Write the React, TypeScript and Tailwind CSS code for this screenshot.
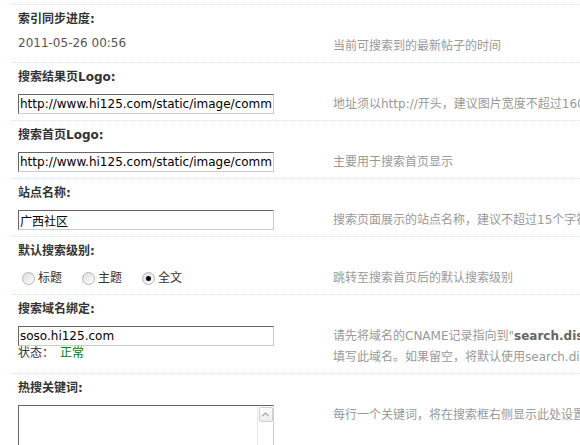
import type { ReactNode } from 'react'

const inputCls =
  "block w-[256px] h-[20px] border border-solid border-t-[#666] border-l-[#666] border-r-[#ccc] border-b-[#ccc] bg-white px-[1px] text-[12px] leading-[18px] text-black outline-none font-['DejaVu_Sans','Noto_Sans_CJK_SC',sans-serif]"

// 一组设置项：标题行 + 内容行（左输入，右提示）
function SettingRow({ label, left, tip }: { label: string; left: ReactNode; tip: ReactNode }) {
  return (
    <div className="border-t border-dotted border-[#cfe6f5]">
      <div className="h-[27px] flex items-center pl-[6px] font-bold text-[#333]">{label}</div>
      <div className="flex items-start pt-[4px] pb-[5px]">
        <div className="w-[315px] shrink-0 pl-[6px]">{left}</div>
        <div className="pl-[6px] text-[#999] leading-[21px] whitespace-nowrap">{tip}</div>
      </div>
    </div>
  )
}

function Radio({ label, checked }: { label: string; checked?: boolean }) {
  return (
    <span className="flex items-center mr-[20px]">
      <span className="w-[13px] h-[13px] rounded-full border border-[#b4b4b4] bg-gradient-to-br from-[#dcdcdc] to-white flex items-center justify-center mr-[3px]">
        {checked && <span className="w-[5px] h-[5px] rounded-full bg-black" />}
      </span>
      <span className="text-[#333]">{label}</span>
    </span>
  )
}

export default function App() {
  return (
    <div className="w-[580px] h-[445px] overflow-hidden bg-white text-[12px] font-['DejaVu_Sans','Noto_Sans_CJK_SC',sans-serif]">
      <div className="w-[900px] pt-[4px] pl-[12px]">
        <SettingRow
          label="索引同步进度:"
          left={<div className="leading-[14px] text-[#555]">2011-05-26 00:56</div>}
          tip="当前可搜索到的最新帖子的时间"
        />
        <SettingRow
          label="搜索结果页Logo:"
          left={<input className={inputCls} readOnly value="http://www.hi125.com/static/image/common/logo_sc_s.png" />}
          tip="地址须以http://开头，建议图片宽度不超过160像素，高度不超过60像素"
        />
        <SettingRow
          label="搜索首页Logo:"
          left={<input className={inputCls} readOnly value="http://www.hi125.com/static/image/common/logo_sc.png" />}
          tip="主要用于搜索首页显示"
        />
        <SettingRow
          label="站点名称:"
          left={<input className={inputCls} readOnly value="广西社区" />}
          tip="搜索页面展示的站点名称，建议不超过15个字符"
        />
        <SettingRow
          label="默认搜索级别:"
          left={
            <div className="h-[20px] flex items-center pl-[4px]">
              <Radio label="标题" />
              <Radio label="主题" />
              <Radio label="全文" checked />
            </div>
          }
          tip="跳转至搜索首页后的默认搜索级别"
        />
        <SettingRow
          label="搜索域名绑定:"
          left={
            <div>
              <input className={inputCls} readOnly value="soso.hi125.com" />
              <div className="leading-[14px] text-[#333]">
                状态：<span className="ml-[6px] text-[#008000]">正常</span>
              </div>
            </div>
          }
          tip={
            <>
              请先将域名的CNAME记录指向到"<b className="text-[#666]">search.discuz.qq.com</b>"，然后在此
              <br />
              填写此域名。如果留空，将默认使用search.discuz.qq.com
            </>
          }
        />
        <SettingRow
          label="热搜关键词:"
          left={
            <div className="w-[256px] h-[80px] border border-solid border-t-[#666] border-l-[#666] border-r-[#ccc] border-b-[#ccc] bg-white flex justify-end">
              <div className="w-[16px] h-full border-l border-[#e6e6e6] flex flex-col items-center pt-[1px]">
                <div className="w-[14px] h-[15px] border border-[#cfcfcf] rounded-[2px] bg-gradient-to-b from-white to-[#ececec] flex items-center justify-center">
                  <svg width="7" height="5" viewBox="0 0 7 5">
                    <path d="M0.5 4 L3.5 1 L6.5 4" stroke="#a8a8a8" strokeWidth="1.2" fill="none" />
                  </svg>
                </div>
              </div>
            </div>
          }
          tip="每行一个关键词，将在搜索框右侧显示此处设置的关键词"
        />
      </div>
    </div>
  )
}
